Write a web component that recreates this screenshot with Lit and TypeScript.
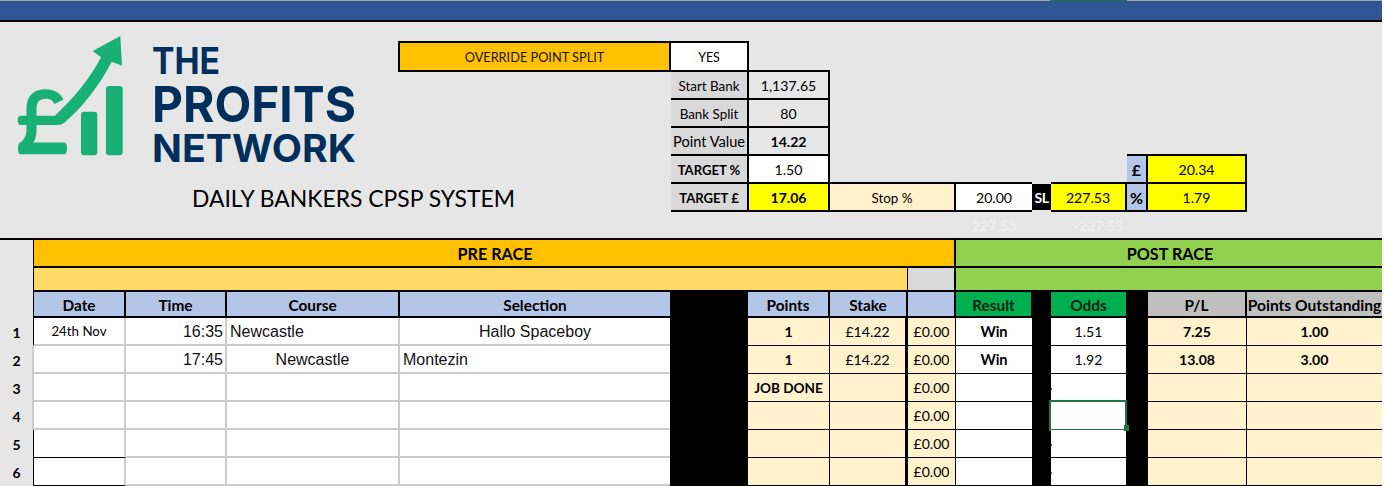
import { LitElement, html, css, svg } from "lit";
import { customElement } from "lit/decorators.js";

const logo = svg`
  <g fill="#19b077">
    <path d="M20.5 115.7H55C75 97 90 78 101 57.3L92.7 51L120.3 36L122 65.7L111.7 61.7C97 90 81 108 64.5 122.5Q61.5 125 57 125H20.5Q17.7 125 17.7 120.3Q17.7 115.7 20.5 115.7Z"/>
    <path d="M20 142.5C24.5 140 26.5 135 26.5 129V108C26.5 96 34 89.3 45 89.3C54 89.3 60 92.5 63.5 99.5L54.5 104C52.5 100 49.5 98.7 45.5 98.7C39.5 98.7 36.5 102.5 36.5 108V130C36.5 135 35.5 139 33.5 142.5H64Q67 142.5 67 148.3Q67 154.3 64 154.3H20.5Q18 154.3 18 148.3Q18 143.5 20 142.5Z"/>
    <rect x="81" y="111.7" width="16.3" height="43.5" rx="3"/>
    <rect x="106" y="86" width="16.7" height="69.2" rx="3"/>
  </g>
  <g fill="#002f5c" font-family="Inter, sans-serif" font-weight="700">
    <text x="152" y="74" font-size="37" textLength="68" lengthAdjust="spacingAndGlyphs">THE</text>
    <text x="152" y="122" font-size="49.5" textLength="204" lengthAdjust="spacingAndGlyphs">PROFITS</text>
    <text x="152" y="162" font-size="38.5" textLength="204" lengthAdjust="spacingAndGlyphs">NETWORK</text>
  </g>`;

const rows = [
  { n: 1, date: "24th Nov", time: "16:35", course: "Newcastle", cA: "l", sel: "Hallo Spaceboy", sA: "c", pts: "1", stake: "£14.22", res: "Win", odds: "1.51", pl: "7.25", po: "1.00" },
  { n: 2, date: "", time: "17:45", course: "Newcastle", cA: "c", sel: "Montezin", sA: "l", pts: "1", stake: "£14.22", res: "Win", odds: "1.92", pl: "13.08", po: "3.00" },
  { n: 3, date: "", time: "", course: "", cA: "c", sel: "", sA: "c", pts: "JOB DONE", stake: "", res: "", odds: "", pl: "", po: "" },
  { n: 4, date: "", time: "", course: "", cA: "c", sel: "", sA: "c", pts: "", stake: "", res: "", odds: "", pl: "", po: "" },
  { n: 5, date: "", time: "", course: "", cA: "c", sel: "", sA: "c", pts: "", stake: "", res: "", odds: "", pl: "", po: "" },
  { n: 6, date: "", time: "", course: "", cA: "c", sel: "", sA: "c", pts: "", stake: "", res: "", odds: "", pl: "", po: "" },
];

@customElement("app-root")
export class AppRoot extends LitElement {
  static styles = css`
    :host { display: block; width: 1384px; height: 486px; overflow: hidden; background: #fff; font-family: "Lato", "Open Sans", sans-serif; font-size: 14.1px; color: #000; }
    .tabs { height: 1px; background: #a6a6a6; width: 1382px; }
    .tab { height: 1px; width: 77px; margin-left: 1050px; background: #217346; }
    .ribbon { height: 19px; width: 1382px; background: #2f5597; border-bottom: 2px solid #000; }

    .panel { display: grid; width: 1382px; height: 218px; box-sizing: border-box; background: #e6e6e6; border-bottom: 2px solid #000;
      grid-template-columns: 398px 273px 78px 81px 126px 76px 19px 76px 21px 99px 135px;
      grid-template-rows: 19px 31px 28px 28px 28px 28px 28px 26px; }
    .logo { grid-column: 1; grid-row: 1 / 7; width: 398px; height: 162px; display: block; }
    .title { grid-column: 1 / 3; grid-row: 7; padding-left: 192px; font-size: 22.9px; line-height: 28px; white-space: nowrap; }
    .c { display: flex; align-items: center; justify-content: center; box-sizing: border-box; white-space: nowrap; padding-top: 1px; border-right: 2px solid #000; border-bottom: 2px solid #000; }
    .t { border-top: 2px solid #000; }
    .l { border-left: 2px solid #000; }
    .n { border-right: 0; }
    .b { font-weight: 700; }
    .tab-lab { background: #d9d9d9; font-size: 13.4px; }
    .sp { font-size: 14.6px; }
    .caps { font-size: 13.1px; }
    .orange { background: #ffc000; color: #1a1400; font-size: 12.75px; }
    .yes { font-size: 12.4px; }
    .white { background: #fff; }
    .yellow { background: #ff0; }
    .cream { background: #fff2cc; font-size: 13.4px; }
    .steel { background: #b4c6e7; font-size: 16px; }
    .sl { background: #000; color: #fff; border: 0; font-size: 14px; font-weight: 700; letter-spacing: -0.4px; }
    .ghost { color: #f1f1f1; border: 0; }
    .ghost.right { justify-content: flex-end; padding-right: 4px; }

    .sheet { display: grid; width: 1382px; background: #e6e6e6;
      grid-template-columns: 33px 93px 101px 173px 270px 78px 82px 78px 48px 76px 19px 75px 22px 99px 135px;
      grid-template-rows: 28px 24px 26px repeat(6, 28px); }
    .h { display: flex; align-items: center; justify-content: center; box-sizing: border-box; font-weight: 700; font-size: 15.4px; padding-top: 1px; white-space: nowrap; border-right: 2px solid #000; border-bottom: 2px solid #000; }
    .big { font-size: 16.2px; }
    .pre { grid-column: 2 / 10; background: #ffc000; border-left: 1px solid #000; padding-left: 2px; }
    .post { grid-column: 10 / 16; background: #92d050; border-right: 0; padding-left: 2px; }
    .pre2 { grid-column: 2 / 9; background: #ffd966; border-left: 1px solid #000; border-right-width: 1px; }
    .grey-h { background: #d9d9d9; }
    .post2 { grid-column: 10 / 16; background: #92d050; border-right: 0; }
    .blue { background: #b4c6e7; }
    .date-h { border-left: 1px solid #000; }
    .green { background: #00b050; border-right: 0; color: #06230f; }
    .silver { background: #bfbfbf; }
    .last { border-right: 0; font-size: 15.6px; }
    .black { background: #000; }
    .corner { grid-column: 1; }
    .num { display: flex; align-items: center; justify-content: center; font-weight: 700; font-size: 14px; }
    .d { display: flex; align-items: center; box-sizing: border-box; background: #fff; white-space: nowrap; position: relative; }
    .gr { border-right: 2px solid #ccc; border-bottom: 2px solid #ccc; }
    .arial { font-family: "Liberation Sans", Arial, sans-serif; font-size: 16px; color: #111; padding-top: 2px; }
    .al { justify-content: flex-start; padding-left: 3px; }
    .ac { justify-content: center; }
    .ar { justify-content: flex-end; padding-right: 2px; }
    .ll-black { border-left: 1px solid #000; }
    .ll-grey { border-left: 2px solid #ccc; margin-left: -1px; }
    .bb-black { border-bottom: 1px solid #000; border-right: 2px solid #ccc; }
    .small { font-size: 13.3px; }
    .k { border-right: 1px solid #000; border-bottom: 1px solid #000; justify-content: center; }
    .thick { border-right: 3px solid #000; }
    .cr { background: #fff2cc; }
    .nr { border-right: 0; }
    .w { font-size: 14.6px; }
    .job { font-size: 13.6px; }
    .sel::after { content: ""; position: absolute; left: -2px; top: -2px; width: 78px; height: 31px; box-sizing: border-box; border: 2px solid #217346; }
    .sel::before { content: ""; position: absolute; right: -3px; bottom: -2px; width: 5px; height: 6px; background: #217346; z-index: 1; }
    .tick::before { content: ""; position: absolute; left: 0; top: 14px; width: 1px; height: 2px; background: #2e75b6; }
  `;

  render() {
    return html`
      <div class="tabs"><div class="tab"></div></div>
      <div class="ribbon"></div>
      <div class="panel">
        <svg class="logo" viewBox="0 22 398 162">${logo}</svg>
        <div class="title">DAILY BANKERS CPSP SYSTEM</div>

        <div class="c t l orange" style="grid-column:2;grid-row:2">OVERRIDE POINT SPLIT</div>
        <div class="c t white yes" style="grid-column:3;grid-row:2">YES</div>

        <div class="c tab-lab" style="grid-column:3;grid-row:3">Start Bank</div>
        <div class="c" style="grid-column:4;grid-row:3;border-top:2px solid #000;margin-top:-2px">1,137.65</div>
        <div class="c tab-lab" style="grid-column:3;grid-row:4">Bank Split</div>
        <div class="c" style="grid-column:4;grid-row:4">80</div>
        <div class="c tab-lab sp" style="grid-column:3;grid-row:5">Point Value</div>
        <div class="c b" style="grid-column:4;grid-row:5">14.22</div>
        <div class="c tab-lab b caps" style="grid-column:3;grid-row:6">TARGET %</div>
        <div class="c white" style="grid-column:4;grid-row:6">1.50</div>
        <div class="c tab-lab b caps" style="grid-column:3;grid-row:7">TARGET £</div>
        <div class="c yellow b" style="grid-column:4;grid-row:7">17.06</div>

        <div class="c cream" style="grid-column:5;grid-row:7;border-top:2px solid #000;margin-top:-2px">Stop %</div>
        <div class="c white n" style="grid-column:6;grid-row:7;border-top:2px solid #000;margin-top:-2px">20.00</div>
        <div class="c sl" style="grid-column:7;grid-row:7;margin-bottom:2px">SL</div>
        <div class="c yellow" style="grid-column:8;grid-row:7;border-top:2px solid #000;margin-top:-2px">227.53</div>
        <div class="c steel b t" style="grid-column:9;grid-row:6;margin-top:-2px">£</div>
        <div class="c yellow t" style="grid-column:10;grid-row:6;margin-top:-2px">20.34</div>
        <div class="c steel b" style="grid-column:9;grid-row:7">%</div>
        <div class="c yellow" style="grid-column:10;grid-row:7">1.79</div>

        <div class="c ghost" style="grid-column:6;grid-row:8">227.53</div>
        <div class="c ghost right" style="grid-column:8;grid-row:8">-227.53</div>
      </div>

      <div class="sheet">
        <div class="corner"></div>
        <div class="h big pre">PRE RACE</div>
        <div class="h big post">POST RACE</div>

        <div class="corner"></div>
        <div class="h pre2"></div>
        <div class="h grey-h"></div>
        <div class="h post2"></div>

        <div class="corner"></div>
        <div class="h blue date-h">Date</div>
        <div class="h blue">Time</div>
        <div class="h blue">Course</div>
        <div class="h blue" style="border-right:0">Selection</div>
        <div class="black"></div>
        <div class="h blue">Points</div>
        <div class="h blue">Stake</div>
        <div class="h blue"></div>
        <div class="h green" style="border-right:1px solid #000">Result</div>
        <div class="black"></div>
        <div class="h green">Odds</div>
        <div class="black"></div>
        <div class="h silver">P/L</div>
        <div class="h silver last">Points Outstanding</div>

        ${rows.map((r) => {
          const blackDate = r.n === 1 || r.n >= 5;
          return html`
            <div class="num">${r.n}</div>
            <div class="d ac small ${blackDate ? "ll-black" : "ll-grey"} ${r.n >= 5 ? "bb-black" : "gr"}">${r.date}</div>
            <div class="d ar gr arial">${r.time}</div>
            <div class="d gr arial ${r.cA === "l" ? "al" : "ac"}">${r.course}</div>
            <div class="d gr arial ${r.sA === "l" ? "al" : "ac"}" style="border-right:0">${r.sel}</div>
            <div class="black"></div>
            <div class="d k cr b ${r.n === 3 ? "job" : ""}">${r.pts}</div>
            <div class="d k cr thick">${r.stake}</div>
            <div class="d k cr">£0.00</div>
            <div class="d k b nr w">${r.res}</div>
            <div class="black"></div>
            <div class="d k nr ${r.n === 4 ? "sel" : r.n >= 3 ? "tick" : ""}">${r.odds}</div>
            <div class="black"></div>
            <div class="d k cr b">${r.pl}</div>
            <div class="d k cr b nr">${r.po}</div>
          `;
        })}
      </div>
    `;
  }
}
